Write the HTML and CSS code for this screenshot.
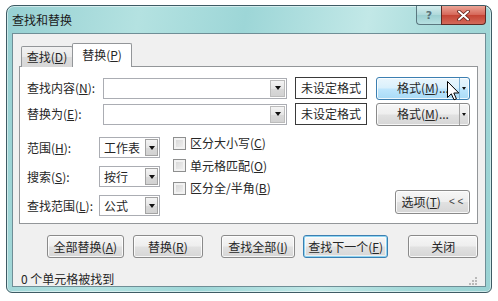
FILE: index.html
```html
<!DOCTYPE html>
<html lang="zh-CN">
<head>
<meta charset="utf-8">
<title>查找和替换</title>
<link rel="stylesheet" href="styles.css">
</head>
<body>
<div class="window">
  <div class="titlebar">
    <span class="title">查找和替换</span>
    <div class="caption">
      <div class="cap cap-help">?</div>
      <div class="cap cap-close">
        <svg width="13" height="11" viewBox="0 0 13 11"><path d="M2 1.5 L11 9.5 M11 1.5 L2 9.5" stroke="#5a1d16" stroke-width="3.6" stroke-linecap="round"/><path d="M2 1.5 L11 9.5 M11 1.5 L2 9.5" stroke="#fff" stroke-width="2" stroke-linecap="round"/></svg>
      </div>
    </div>
  </div>
  <div class="client">
    <div class="tabs">
      <div class="tab">查找(<u>D</u>)</div>
      <div class="tab active">替换(<u>P</u>)</div>
    </div>
    <div class="panel">
      <div class="find-row">
        <span class="label">查找内容(<u>N</u>):</span>
        <div class="combo wide"><div class="field"></div><div class="drop"><i class="tri"></i></div></div>
        <div class="fmtbox">未设定格式</div>
        <div class="btn split hover">
          <span class="main">格式(<u>M</u>)...</span><span class="arr"><i class="tri small"></i></span>
          <svg class="cursor" width="13" height="20" viewBox="0 0 13 20"><path d="M0.5 0.5 L0.5 16.5 L4.3 12.8 L7 18.8 L9.4 17.8 L6.8 12 L11.8 12 Z" fill="#fff" stroke="#000" stroke-width="1" stroke-linejoin="round"/></svg>
        </div>
      </div>
      <div class="find-row second">
        <span class="label">替换为(<u>E</u>):</span>
        <div class="combo wide"><div class="field"></div><div class="drop"><i class="tri"></i></div></div>
        <div class="fmtbox">未设定格式</div>
        <div class="btn split">
          <span class="main">格式(<u>M</u>)...</span><span class="arr"><i class="tri small"></i></span>
        </div>
      </div>
      <div class="options">
        <div class="opt-grid">
          <span class="label">范围(<u>H</u>):</span>
          <div class="combo small"><div class="field">工作表</div><div class="drop boxed"><i class="tri"></i></div></div>
          <span class="label">搜索(<u>S</u>):</span>
          <div class="combo small"><div class="field">按行</div><div class="drop boxed"><i class="tri"></i></div></div>
          <span class="label">查找范围(<u>L</u>):</span>
          <div class="combo small"><div class="field">公式</div><div class="drop boxed"><i class="tri"></i></div></div>
        </div>
        <div class="checks">
          <div class="check"><span class="box"></span>区分大小写(<u>C</u>)</div>
          <div class="check"><span class="box"></span>单元格匹配(<u>O</u>)</div>
          <div class="check"><span class="box"></span>区分全/半角(<u>B</u>)</div>
        </div>
        <div class="btn opt-btn">选项(<u>T</u>)<span class="chev">&lt; &lt;</span></div>
      </div>
    </div>
    <div class="buttons">
      <div class="btn b1">全部替换(<u>A</u>)</div>
      <div class="btn b2">替换(<u>R</u>)</div>
      <div class="btn b3">查找全部(<u>I</u>)</div>
      <div class="btn b4 focus">查找下一个(<u>F</u>)</div>
      <div class="btn b5">关闭</div>
    </div>
    <div class="status">
      <span>0 个单元格被找到</span>
      <svg class="grip" width="8" height="8" viewBox="0 0 8 8"><g fill="#b9b9b9"><rect x="6" y="0" width="2" height="2"/><rect x="3" y="3" width="2" height="2"/><rect x="6" y="3" width="2" height="2"/><rect x="0" y="6" width="2" height="2"/><rect x="3" y="6" width="2" height="2"/><rect x="6" y="6" width="2" height="2"/></g></svg>
    </div>
  </div>
</div>
</body>
</html>
```
FILE: styles.css
```css
* { box-sizing: border-box; }

body {
  margin: 0;
  width: 498px;
  height: 301px;
  overflow: hidden;
  background: #ffffff;
  font-family: "Noto Sans CJK SC", "Noto Sans", sans-serif;
  font-size: 12px;
  color: #262626;
}

u { text-decoration: underline; text-underline-offset: 1px; }

.window {
  margin: 5px 0 0 6px;
  width: 486px;
  height: 288px;
  border: 1px solid #3e5b64;
  border-radius: 8px 8px 6px 6px;
  padding: 0 5px 5px 5px;
  display: flex;
  flex-direction: column;
  background: linear-gradient(100deg, #96d0d2 0%, #b4e2e1 25%, #9dd6d7 45%, #c2e8e7 68%, #a2d8d8 85%, #9ad2d3 100%);
  box-shadow: inset 0 0 0 1px rgba(255, 255, 255, 0.5);
}

.titlebar {
  height: 27px;
  flex: none;
  display: flex;
  align-items: flex-start;
}

.title {
  padding-top: 6px;
  line-height: 16px;
  color: #1a1a1a;
}

.caption {
  margin-left: auto;
  display: flex;
}

.cap {
  height: 19px;
  display: flex;
  align-items: center;
  justify-content: center;
}

.cap-help {
  width: 25px;
  border: 1px solid #5b7880;
  border-top: none;
  border-right: none;
  border-radius: 0 0 0 4px;
  background: linear-gradient(#d5eeee, #aed8da 50%, #9ccfd1 51%, #b7e0e1);
  color: #5a737a;
  font-family: "DejaVu Sans", sans-serif;
  font-size: 11px;
  font-weight: bold;
}

.cap-close {
  width: 45px;
  border: 1px solid #5d2a24;
  border-top: none;
  border-radius: 0 0 4px 0;
  background: linear-gradient(#eba496, #d6685a 48%, #c54434 52%, #d36a5a);
}

.client {
  flex: 1;
  display: flex;
  flex-direction: column;
  border: 1px solid #6f8e96;
  background: #f0f0f0;
  padding: 9px 7px 0 6px;
}

.tabs {
  display: flex;
  align-items: flex-end;
  height: 24px;
  margin-left: 2px;
  margin-bottom: -1px;
  position: relative;
  z-index: 1;
}

.tab {
  width: 52px;
  height: 21px;
  border: 1px solid #939699;
  border-bottom: none;
  border-radius: 2px 2px 0 0;
  background: linear-gradient(#f2f2f2, #e9e9e9 50%, #dcdcdc 51%, #d7d7d7);
  display: flex;
  align-items: center;
  justify-content: center;
  line-height: 16px;
}

.tab.active {
  width: 60px;
  height: 24px;
  background: #ffffff;
  margin-left: -1px;
  padding-bottom: 2px;
}

.panel {
  height: 158px;
  border: 1px solid #939699;
  background: #ffffff;
  padding: 10px 7px 0 7px;
  display: flex;
  flex-direction: column;
}

.find-row {
  display: flex;
  align-items: center;
  height: 22px;
}

.find-row.second { margin-top: 4px; }

.label {
  line-height: 16px;
  white-space: nowrap;
}

.find-row .label { width: 76px; }

.combo {
  display: flex;
  height: 21px;
  border: 1px solid #abadb3;
  background: #fff;
}

.combo.wide { width: 184px; }

.field {
  flex: 1;
  line-height: 19px;
  padding-left: 4px;
}

.drop {
  width: 15px;
  margin: 1px;
  border: 1px solid #bcbcbc;
  background: linear-gradient(#f4f4f4, #e6e6e6 50%, #d9d9d9 51%, #d2d2d2);
  display: flex;
  align-items: center;
  justify-content: center;
}

.drop.boxed {
  width: 13px;
  border-color: #a3a3a3;
}

.tri {
  width: 0;
  height: 0;
  border-left: 3.5px solid transparent;
  border-right: 3.5px solid transparent;
  border-top: 4px solid #111;
}

.tri.small {
  border-left-width: 2.5px;
  border-right-width: 2.5px;
  border-top-width: 3px;
}

.fmtbox {
  margin-left: 8px;
  width: 72px;
  height: 22px;
  border: 1px solid #3a3a3a;
  background: #fff;
  display: flex;
  align-items: center;
  justify-content: center;
  line-height: 16px;
}

.btn {
  height: 23px;
  border: 1px solid #8a8a8a;
  border-radius: 3px;
  background: linear-gradient(#f6f6f6 0%, #eeeeee 48%, #e1e1e1 52%, #d6d6d6 100%);
  box-shadow: inset 0 0 0 1px rgba(255, 255, 255, 0.8);
  display: flex;
  align-items: center;
  justify-content: center;
  line-height: 16px;
  white-space: nowrap;
}

.btn.split {
  margin-left: 9px;
  width: 94px;
  justify-content: flex-start;
  position: relative;
}

.split .main {
  flex: 1;
  text-align: center;
  padding-left: 10px;
}

.split .arr {
  width: 10px;
  height: 100%;
  border-left: 1px solid #a3a3a3;
  display: flex;
  align-items: center;
  justify-content: center;
  padding-right: 1px;
}

.btn.hover {
  border-color: #3c7fb1;
  background: linear-gradient(#eaf6fd 0%, #d9f0fc 48%, #bee6fd 52%, #a9dbf6 100%);
}

.btn.hover .arr { border-left-color: #7fb1d3; }

.cursor {
  position: absolute;
  left: 70px;
  top: 3px;
}

.options {
  margin-top: 12px;
  display: flex;
  align-items: flex-start;
  flex: 1;
}

.opt-grid {
  display: grid;
  grid-template-columns: 72px 61px;
  grid-auto-rows: 21px;
  row-gap: 8px;
  align-items: center;
}

.combo.small { width: 61px; }

.checks {
  margin-left: 13px;
  margin-top: -5px;
  display: flex;
  flex-direction: column;
}

.check {
  height: 22.5px;
  display: flex;
  align-items: center;
  line-height: 16px;
  white-space: nowrap;
}

.box {
  width: 13px;
  height: 13px;
  margin-right: 4px;
  border: 1px solid #8e8f8f;
  background: linear-gradient(135deg, #d3d3d3, #f3f3f3);
  box-shadow: inset 0 0 0 2px #f2f2f2;
}

.opt-btn {
  margin-left: auto;
  align-self: flex-end;
  margin-bottom: 9px;
  width: 75px;
  height: 24px;
}

.chev {
  margin-left: 8px;
  font-family: "Liberation Sans", sans-serif;
  font-size: 10px;
  color: #444;
}

.buttons {
  display: flex;
  margin-top: 11px;
  padding-left: 28px;
}

.b1 { width: 78px; }
.b2 { width: 72px; margin-left: 9px; }
.b3 { width: 75px; margin-left: 18px; }
.b4 { width: 87px; margin-left: 8px; }
.b5 { width: 71px; margin-left: 20px; }

.btn.focus {
  border-color: #3c7fb1;
  box-shadow: inset 0 0 0 1px #8ed4f2, inset 0 0 0 2px rgba(255, 255, 255, 0.6);
}

.status {
  margin-top: 13px;
  height: 15px;
  line-height: 15px;
  padding-left: 2px;
  display: flex;
  align-items: center;
}

.grip {
  margin-left: auto;
  margin-right: 1px;
  margin-top: 4px;
}
```
